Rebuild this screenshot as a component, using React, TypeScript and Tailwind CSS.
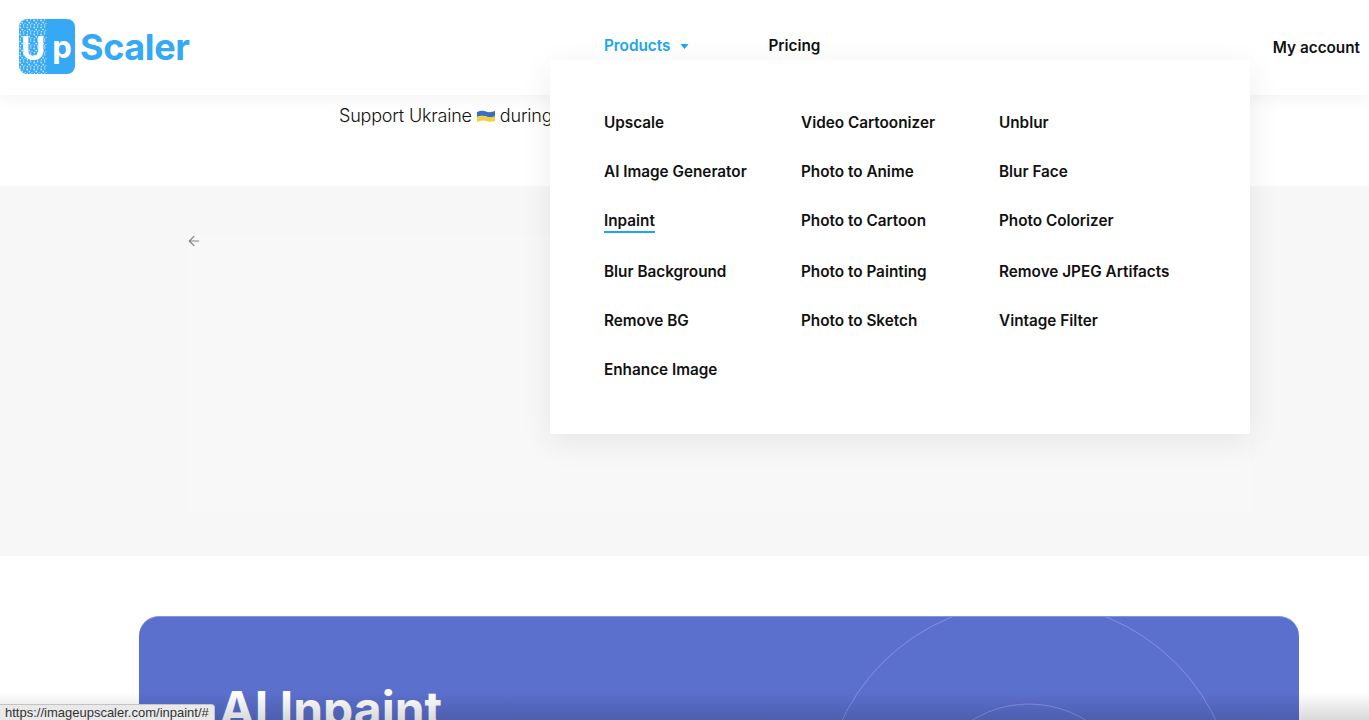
import React from "react";
import { ArrowLeft } from "lucide-react";

const font = { fontFamily: "Inter, 'Open Sans', sans-serif" };

function Logo() {
  return (
    <div className="flex items-center">
      <svg width="58" height="58" viewBox="0 0 58 58" className="shrink-0">
        <defs>
          <pattern id="speck" width="7" height="7" patternUnits="userSpaceOnUse">
            <rect width="7" height="7" fill="#35a9f5" />
            <circle cx="1.2" cy="1.4" r="1" fill="#bfe4fb" />
            <circle cx="4.7" cy="0.9" r="0.7" fill="#e3f3fe" />
            <circle cx="3.2" cy="3.6" r="0.9" fill="#d5eefd" />
            <circle cx="6" cy="4.4" r="0.7" fill="#a8dbfa" />
            <circle cx="1.4" cy="5.7" r="0.7" fill="#e3f3fe" />
            <circle cx="4.6" cy="6" r="0.8" fill="#c9e9fc" />
          </pattern>
          <clipPath id="lg">
            <rect x="0" y="0" width="56" height="55" rx="8" />
          </clipPath>
        </defs>
        <g clipPath="url(#lg)" transform="translate(0,1)">
          <rect x="0" y="0" width="28" height="55" fill="url(#speck)" />
          <rect x="28" y="0" width="28" height="55" fill="#35a9f5" />
        </g>
        <text x="14" y="42" textAnchor="middle" fontSize="33" fontWeight="700" fill="#fff" fontFamily="Inter, sans-serif">U</text>
        <text x="43" y="40" textAnchor="middle" fontSize="31" fontWeight="700" fill="#fff" fontFamily="Inter, sans-serif">p</text>
      </svg>
      <span className="ml-[3px] text-[36px] font-bold leading-none tracking-[-0.4px] text-[#35a9f5]">Scaler</span>
    </div>
  );
}

const columns = [
  ["Upscale", "AI Image Generator", "Inpaint", "Blur Background", "Remove BG", "Enhance Image"],
  ["Video Cartoonizer", "Photo to Anime", "Photo to Cartoon", "Photo to Painting", "Photo to Sketch"],
  ["Unblur", "Blur Face", "Photo Colorizer", "Remove JPEG Artifacts", "Vintage Filter"],
];

function Dropdown() {
  return (
    <div className="absolute left-[550px] top-[60px] z-20 flex h-[374px] w-[700px] bg-white pl-[54px] pt-[50px] shadow-[0_8px_30px_rgba(0,0,0,0.08)]">
      {columns.map((col, i) => (
        <div key={i} className={i === 2 ? "flex flex-col" : i === 0 ? "flex w-[197px] flex-col" : "flex w-[198px] flex-col"}>
          {col.map((item, j) => (
            <div key={item} className={j === 3 ? "mt-[2px] h-[49px]" : "h-[49px]"}>
              <span
                className={
                  item === "Inpaint"
                    ? "inline-block border-b-2 border-[#1aa7ec] text-[15.3px] font-semibold leading-[21px] text-[#111]"
                    : "inline-block text-[15.3px] font-semibold leading-[22px] text-[#111]"
                }
              >
                {item}
              </span>
            </div>
          ))}
        </div>
      ))}
    </div>
  );
}

export default function App() {
  return (
    <div className="relative h-[720px] w-full overflow-hidden bg-white" style={font}>
      <header className="relative z-10 flex h-[95px] items-start bg-white pl-[19px] pr-[9px] shadow-[0_4px_14px_rgba(0,0,0,0.05)]">
        <div className="mt-[18px] w-[170px]">
          <Logo />
        </div>
        <nav className="ml-[415px] mt-[35px] flex items-center text-[15.3px] font-semibold leading-[22px]">
          <span className="text-[#1aa7ec]">Products</span>
          <svg width="9" height="7" viewBox="0 0 9 7" className="ml-[10px]">
            <path d="M0.5 1 H8.5 L4.5 6 Z" fill="#1aa7ec" />
          </svg>
          <span className="ml-[79px] text-[#111]">Pricing</span>
        </nav>
        <span className="ml-auto mt-[37px] text-[15.3px] font-semibold leading-[22px] text-[#111]">My account</span>
      </header>

      <section className="h-[91px] bg-white pl-[339px] pt-[9px]">
        <span className="flex items-center text-[18px] font-light leading-[24px] tracking-[-0.2px] text-[#111]">
          Support Ukraine
          <svg width="18" height="13" viewBox="0 0 18 13" className="mx-[5px]">
            <path d="M0 2 Q5 0 9 1.5 T18 1 V6.5 Q13 8 9 6.5 T0 7 Z" fill="#3a6fc0" />
            <path d="M0 7 Q5 5.5 9 6.5 T18 6.5 V11 Q13 12.5 9 11 T0 12 Z" fill="#f4cf3c" />
          </svg>
          during
        </span>
      </section>

      <section className="h-[370px] bg-[#f7f7f7] px-[187px] pt-[50px]">
        <div className="flow-root h-[276px] w-[1063px] bg-[#f8f8f8]">
          <ArrowLeft size={16} strokeWidth={1.7} className="-ml-[1px] -mt-[3px] text-[#808080]" />
        </div>
      </section>

      <section className="bg-white pl-[139px] pr-[70px] pt-[60px]">
        <div className="relative h-[300px] overflow-hidden rounded-[20px] border-t border-[#7f96ee] bg-[#5b6fcd] pl-[80px] pt-[64px]">
          <svg className="absolute left-[640px] top-0" width="520" height="300" viewBox="0 0 520 300" fill="none">
            <circle cx="250" cy="192" r="207" stroke="#8292e0" strokeWidth="1" />
            <circle cx="250" cy="195" r="108" stroke="#8292e0" strokeWidth="1" />
          </svg>
          <h1 className="relative text-[48px] font-bold leading-[56px] text-white">AI Inpaint</h1>
        </div>
      </section>

      <Dropdown />

      <div className="pointer-events-none absolute bottom-0 left-0 z-30 h-[28px] w-full bg-gradient-to-b from-transparent to-black/15" />

      <div
        className="absolute bottom-0 left-0 z-40 flex h-[16px] w-[215px] items-center rounded-tr-[4px] border-r border-t border-[#c4c4c4] bg-[#e9e9e9] pl-[5px] text-[13px] leading-none text-[#333]"
        style={{ fontFamily: "'Liberation Sans', sans-serif" }}
      >
        https://imageupscaler.com/inpaint/#
      </div>
    </div>
  );
}
